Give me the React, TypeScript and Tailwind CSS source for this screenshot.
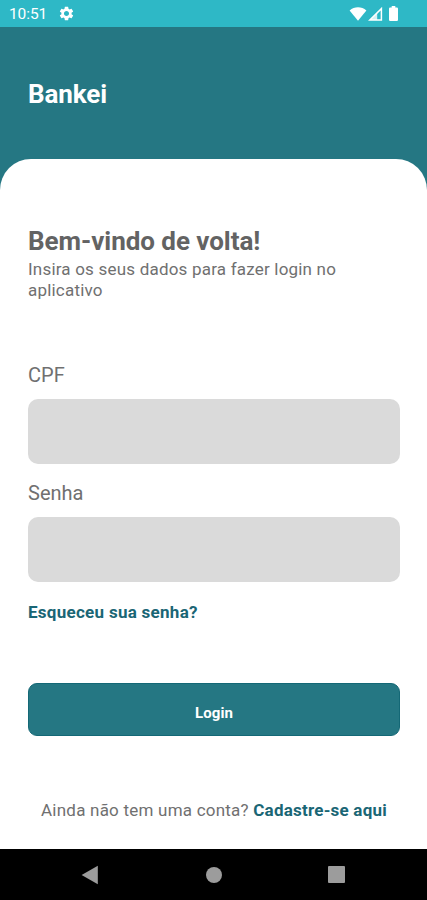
import type { ReactNode } from "react";
import { MdSettings } from "react-icons/md";

function StatusBar() {
  return (
    <div className="flex h-[27px] shrink-0 items-center bg-[#2eb8c6] pl-[9px] pr-[29px] text-white">
      <span className="pt-[2px] text-[15.5px] leading-none tracking-[-0.1px]">10:51</span>
      <MdSettings className="ml-[11px] size-[17px]" />
      <div className="ml-auto flex items-center">
        <svg width="18" height="14" viewBox="0 0 18 14" fill="currentColor">
          <path d="M0.6 3.4C5.4-0.8 12.6-0.8 17.4 3.4L9 13.8Z" />
        </svg>
        <svg className="ml-[1px]" width="15" height="14" viewBox="0 0 15 14" fill="none">
          <path d="M1.8 13L13.4 1.6V13Z" stroke="currentColor" strokeWidth="1.5" />
          <path d="M9.2 5.8V13H1.8Z" fill="currentColor" fillOpacity="0.8" />
        </svg>
        <svg className="ml-[6px]" width="9" height="15" viewBox="0 0 10 15" preserveAspectRatio="none" fill="currentColor">
          <path d="M3 0H7V1.6H8.8Q10 1.6 10 2.8V13.8Q10 15 8.8 15H1.2Q0 15 0 13.8V2.8Q0 1.6 1.2 1.6H3Z" />
        </svg>
      </div>
    </div>
  );
}

function Field({ id, label, type }: { id: string; label: string; type: string }) {
  return (
    <div className="flex flex-col">
      <label htmlFor={id} className="text-[20px] leading-[24px]">
        {label}
      </label>
      <input id={id} type={type} className="mt-3 h-[65px] w-full rounded-[10px] bg-[#dadada] px-4 outline-none" />
    </div>
  );
}

function NavButton({ label, children }: { label: string; children: ReactNode }) {
  return (
    <button aria-label={label} className="flex size-[20px] items-center justify-center">
      {children}
    </button>
  );
}

function NavigationBar() {
  return (
    <nav className="flex h-[51px] shrink-0 items-center justify-between bg-black pl-[80px] pr-[81px] text-[#9c9c9c]">
      <NavButton label="Voltar">
        <svg width="18" height="20" viewBox="0 0 18 20" fill="currentColor">
          <path d="M0.6 10L16.8 0.8V19.2Z" />
        </svg>
      </NavButton>
      <NavButton label="Início">
        <span className="ml-px size-[16px] rounded-full bg-[#9c9c9c]" />
      </NavButton>
      <NavButton label="Recentes">
        <span className="size-[17px] rounded-[1px] bg-[#9c9c9c]" />
      </NavButton>
    </nav>
  );
}

export default function App() {
  return (
    <div className="flex h-[900px] w-full flex-col overflow-hidden bg-[#257783] font-['Roboto',sans-serif] text-[#707070]">
      <StatusBar />
      <header className="flex h-[132px] shrink-0 items-center px-7 pt-[2px]">
        <h1 className="text-[26px] leading-[32px] font-bold tracking-[-0.1px] text-white">Bankei</h1>
      </header>

      <main className="flex grow flex-col rounded-t-[31px] bg-white pl-7 pr-[27px] pt-[66px]">
        <h2 className="text-[26px] leading-[32px] font-bold tracking-[-0.05px] text-[#636363]">Bem-vindo de volta!</h2>
        <p className="mt-[2px] text-[17px] leading-[20.5px] tracking-[0.2px]">
          Insira os seus dados para fazer login no aplicativo
        </p>

        <form className="mt-[63px] flex flex-col" onSubmit={(e) => e.preventDefault()}>
          <div className="flex flex-col gap-[17.4px]">
            <Field id="cpf" label="CPF" type="text" />
            <Field id="senha" label="Senha" type="password" />
          </div>
          <a
            href="#"
            className="mt-[18.6px] self-start text-[17px] leading-[22px] font-bold tracking-[0.28px] text-[#1a6675]"
          >
            Esqueceu sua senha?
          </a>
          <button className="mt-[60.5px] h-[53px] rounded-[9px] border border-[#146876] bg-[#257783] pt-[7px] text-[15px] font-bold tracking-[0.1px] text-white">
            Login
          </button>
        </form>

        <p className="mt-[62.5px] text-center text-[17px] leading-[22px] tracking-[0.22px] whitespace-nowrap">
          Ainda não tem uma conta?{" "}
          <a href="#" className="font-bold text-[#1a6675]">
            Cadastre-se aqui
          </a>
        </p>
      </main>

      <NavigationBar />
    </div>
  );
}
